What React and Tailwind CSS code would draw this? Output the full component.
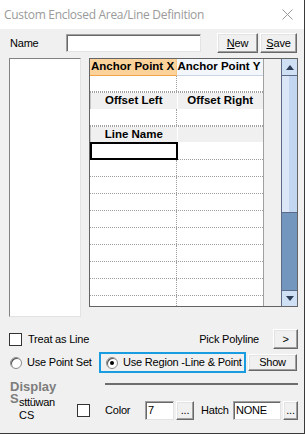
import React from 'react';

function Btn({ className = '', children }) {
  return (
    <div className={`flex items-center justify-center bg-[#f0f0f0] border border-t-white border-l-white border-r-[#696969] border-b-[#696969] shadow-[inset_-1px_-1px_0_#a0a0a0,inset_1px_1px_0_#e3e3e3] text-[11px] tracking-[-0.2px] text-black whitespace-nowrap ${className}`}>
      {children}
    </div>
  );
}

function Field({ className = '', children }) {
  return (
    <div className={`flex items-center bg-white border border-t-[#a0a0a0] border-l-[#a0a0a0] border-r-[#e3e3e3] border-b-[#e3e3e3] shadow-[inset_1px_1px_0_#696969] pl-[2px] text-[11px] text-black ${className}`}>
      {children}
    </div>
  );
}

function CheckBox({ className = '' }) {
  return <div className={`w-[13px] h-[13px] bg-white border border-[#333] shrink-0 ${className}`} />;
}

function Radio({ checked }) {
  return (
    <div className="w-[12px] h-[12px] rounded-full bg-white border border-[#8a8a8a] shadow-[inset_1px_1px_0_#555] flex items-center justify-center shrink-0">
      {checked && <div className="w-[4px] h-[4px] rounded-full bg-black" />}
    </div>
  );
}

// grid rows; heights follow the screenshot
const rows = [
  { kind: 'head1' },
  { kind: 'blank', h: 'h-[16px]' },
  { kind: 'head', a: 'Offset Left', b: 'Offset Right', h: 'h-[17px]' },
  { kind: 'blank', h: 'h-[17px]' },
  { kind: 'head', a: 'Line Name', b: '', h: 'h-[16px]' },
  { kind: 'selected' },
  ...Array.from({ length: 9 }, () => ({ kind: 'blank', h: 'h-[17px]' })),
];

function GridRow({ row }) {
  if (row.kind === 'head1') {
    return (
      <div className="flex h-[17px] shrink-0">
        <div className="w-[87px] bg-[#fbd39a] border-b border-[#f2a54a] border-r border-r-[#f5c98a] flex items-center pl-[1px] font-bold text-[11.5px] whitespace-nowrap">Anchor Point X</div>
        <div className="w-[87px] bg-[#f3f6fb] border-b border-[#c9d4e4] flex items-center pl-[1px] font-bold text-[11.5px] whitespace-nowrap">Anchor Point Y</div>
      </div>
    );
  }
  if (row.kind === 'head') {
    return (
      <div className={`flex ${row.h} shrink-0 border-t border-dotted border-[#a0a0a0]`}>
        <div className="w-[87px] bg-[#f0f0f0] border-l border-[#c8c8c8] flex items-center justify-center font-bold text-[11.5px]">{row.a}</div>
        <div className="w-[87px] bg-[#f0f0f0] border-l border-white flex items-center justify-center font-bold text-[11.5px]">{row.b}</div>
      </div>
    );
  }
  if (row.kind === 'selected') {
    return (
      <div className="flex h-[18px] shrink-0">
        <div className="w-[88px] border-2 border-black bg-white" />
        <div className="w-[86px] bg-white border-b border-dotted border-[#a0a0a0]" />
      </div>
    );
  }
  return (
    <div className={`flex ${row.h} shrink-0 border-b border-dotted border-[#a0a0a0] bg-white`}>
      <div className="w-[87px] border-r border-dotted border-[#a0a0a0]" />
      <div className="w-[86px]" />
    </div>
  );
}

export default function App() {
  return (
    <div className="w-[305px] h-[434px] bg-[#f0f0f0] flex flex-col overflow-hidden border-r border-b border-[#3a3a3a] font-['Liberation_Sans',Arial,sans-serif] text-black">
      {/* title bar */}
      <div className="h-[29px] bg-white flex items-center justify-between pl-[4px] pr-[11px] shrink-0">
        <span className="text-[12px] text-[#9a9a9a] font-['Open_Sans',sans-serif] tracking-[-0.3px]">Custom Enclosed Area/Line Definition</span>
        <svg width="11" height="11" viewBox="0 0 11 11">
          <path d="M0.5 0.5 L10.5 10.5 M10.5 0.5 L0.5 10.5" stroke="#9a9a9a" strokeWidth="1" />
        </svg>
      </div>

      {/* name row */}
      <div className="flex items-center h-[20px] mt-[4px] text-[11px] tracking-[-0.2px]">
        <span className="ml-[10px] w-[56px]">Name</span>
        <Field className="w-[135px] h-[18px]" />
        <Btn className="ml-[16px] w-[41px] h-[20px]"><span><u>N</u>ew</span></Btn>
        <Btn className="ml-[2px] w-[37px] h-[20px]"><span><u>S</u>ave</span></Btn>
      </div>

      {/* main area */}
      <div className="flex h-[259px] mt-[5px]">
        <div className="ml-[9px] w-[72px] h-[259px] bg-white border border-t-[#828282] border-l-[#828282] border-r-[#e3e3e3] border-b-[#e3e3e3]" />
        <div className="ml-[8px] w-[209px] h-[249px] border border-[#646464] flex bg-[#f0f0f0]">
          <div className="w-[174px] flex flex-col overflow-hidden border-r border-[#a0a0a0] bg-white">
            {rows.map((r, i) => (
              <GridRow key={i} row={r} />
            ))}
          </div>
          <div className="w-[17px]" />
          {/* scrollbar */}
          <div className="w-[16px] flex flex-col border-l border-[#5b6a86]">
            <div className="h-[17px] bg-[#cfe0f5] border-b border-[#5b6a86] flex items-center justify-center">
              <div className="w-0 h-0 border-l-[4px] border-r-[4px] border-b-[5px] border-l-transparent border-r-transparent border-b-[#2d3e58]" />
            </div>
            <div className="h-[137px] flex border-b border-[#5b6a86]">
              <div className="w-[7px] bg-[#dbe7f7]" />
              <div className="flex-1 bg-[#c3d6f1]" />
            </div>
            <div className="flex-1 bg-[#7396be]" />
            <div className="h-[16px] bg-[#cfe0f5] border-t border-[#5b6a86] flex items-center justify-center">
              <div className="w-0 h-0 border-l-[4px] border-r-[4px] border-t-[5px] border-l-transparent border-r-transparent border-t-[#2d3e58]" />
            </div>
          </div>
        </div>
      </div>

      {/* treat as line row */}
      <div className="flex items-center h-[20px] mt-[12px] text-[11px] tracking-[-0.2px] whitespace-nowrap">
        <CheckBox className="ml-[9px]" />
        <span className="ml-[6px]">Treat as Line</span>
        <span className="ml-auto mr-[14px]">Pick Polyline</span>
        <Btn className="w-[25px] h-[20px] mr-[6px] text-[10px]">&gt;</Btn>
      </div>

      {/* radio row */}
      <div className="flex items-center h-[21px] mt-[3px] text-[11px] tracking-[-0.2px] whitespace-nowrap">
        <div className="ml-[10px] w-[89px] flex items-center gap-[5px]">
          <Radio />
          <span>Use Point Set</span>
        </div>
        <div className="w-[147px] h-[21px] border-2 border-[#1a9de0] flex items-center pl-[5px] gap-[5px]">
          <Radio checked />
          <span>Use Region -Line &amp; Point</span>
        </div>
        <Btn className="ml-[2px] w-[49px] h-[17px] text-[11.5px]">Show</Btn>
      </div>

      {/* display settings */}
      <div className="flex mt-[6px] h-[42px]">
        <div className="relative w-[70px] h-[42px] ml-[10px]">
          <div className="text-[#7d7d7d] font-bold text-[13px] leading-[15px]">Display</div>
          <div className="absolute left-0 top-[12px] text-[#7d7d7d] font-bold text-[13px] leading-[15px]">S</div>
          <div className="absolute left-[9px] top-[17px] text-[11px] leading-[12px] tracking-[-0.3px] bg-[#f0f0f0]">sttüwan</div>
          <div className="absolute left-[9px] top-[30px] text-[11px] leading-[12px]">CS</div>
        </div>
        <div className="flex flex-col flex-1">
          <div className="h-[2px] bg-[#6e6e6e] mt-[4px] ml-[25px] mr-[6px]" />
          <div className="flex items-center mt-[16px] h-[19px] text-[11px] tracking-[-0.2px]">
            <CheckBox className="-ml-[3px]" />
            <span className="ml-[15px] w-[40px]">Color</span>
            <Field className="w-[29px] h-[19px]">7</Field>
            <Btn className="ml-[2px] w-[18px] h-[19px]">...</Btn>
            <span className="ml-[7px] w-[32px]">Hatch</span>
            <Field className="w-[48px] h-[19px]">NONE</Field>
            <Btn className="ml-[2px] w-[15px] h-[19px]">...</Btn>
          </div>
        </div>
      </div>
    </div>
  );
}
